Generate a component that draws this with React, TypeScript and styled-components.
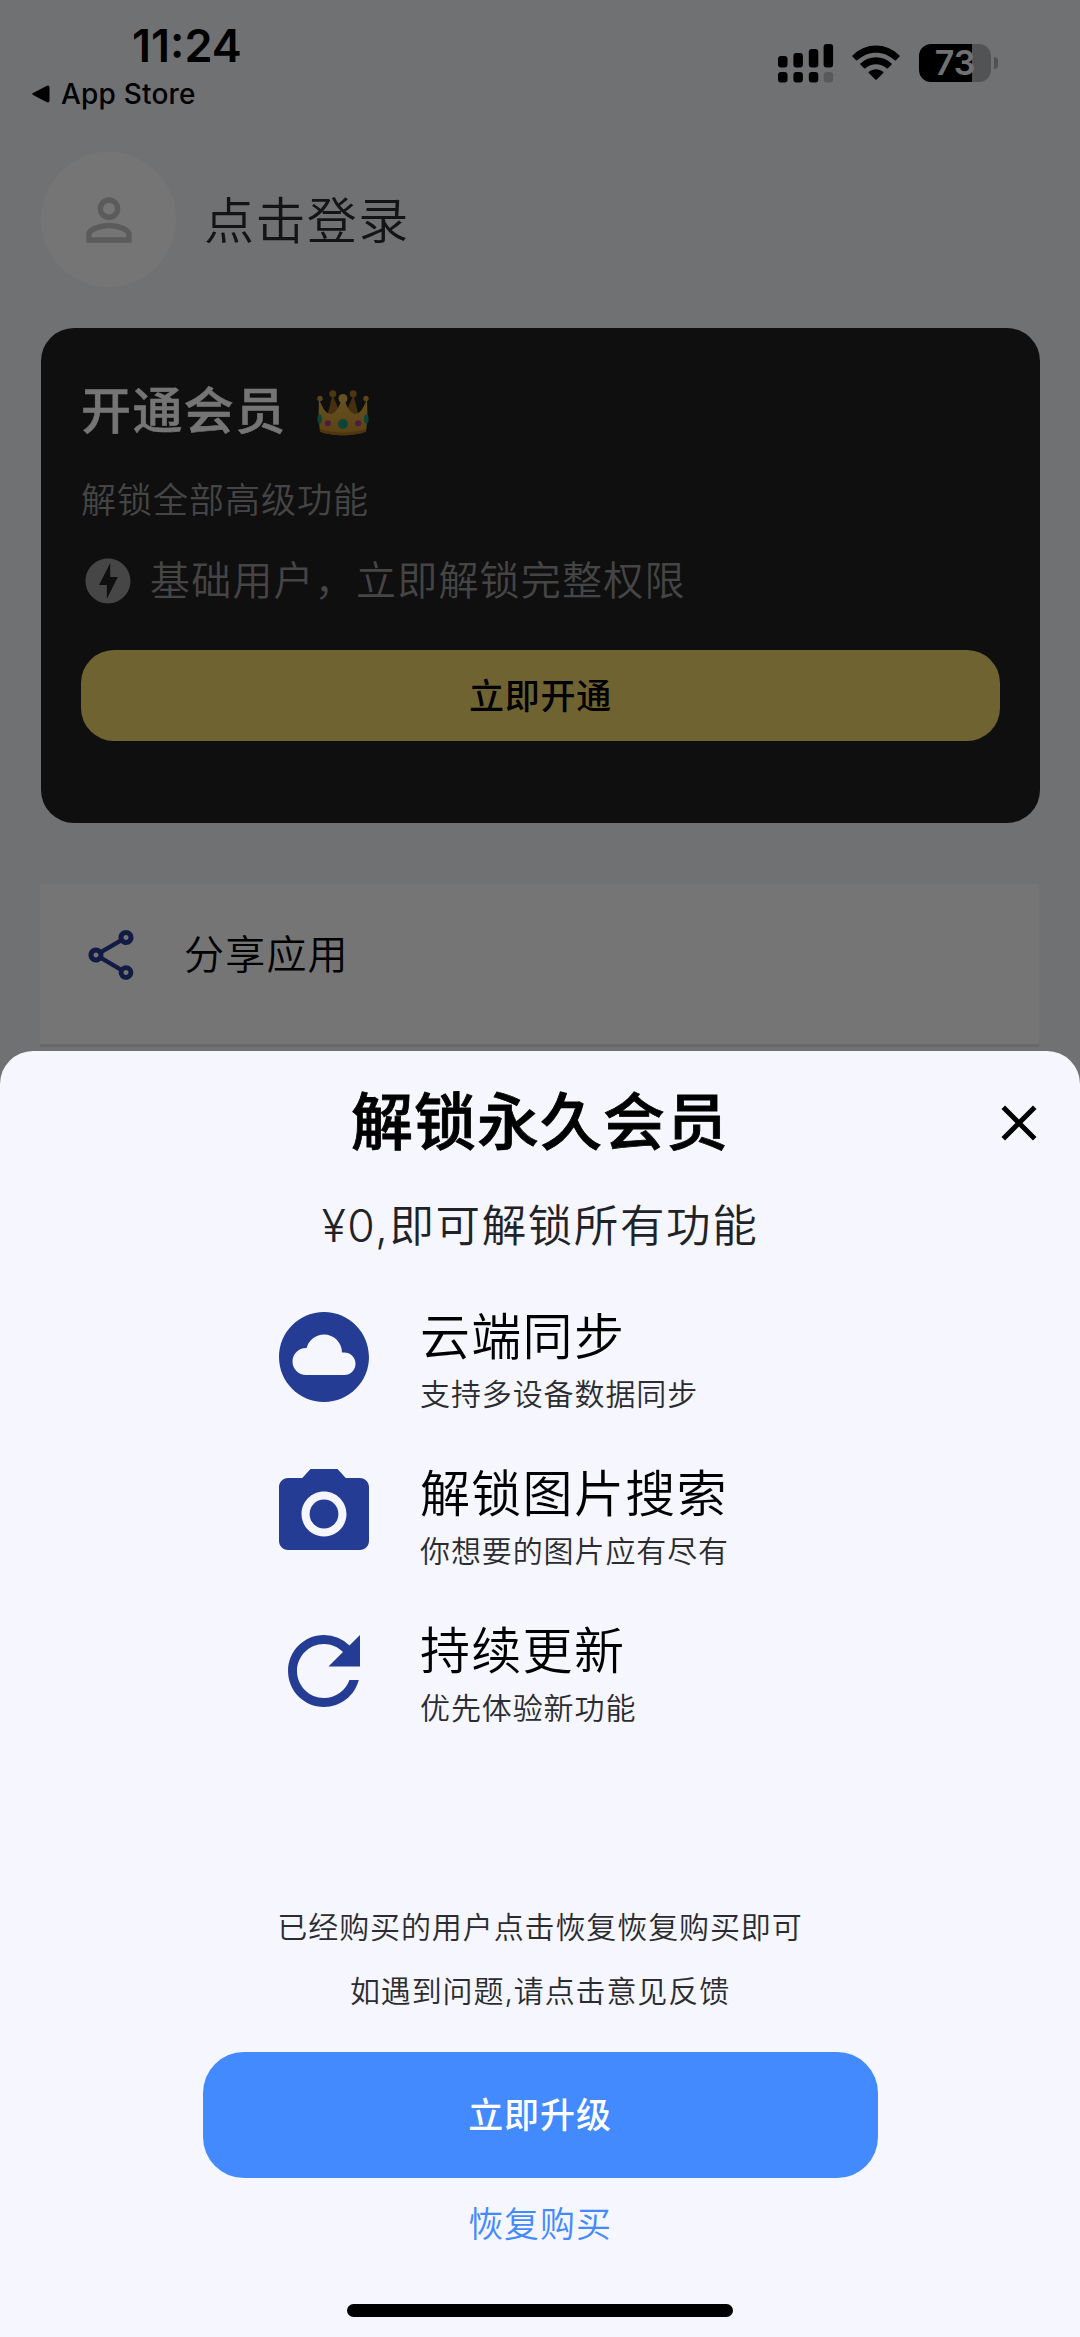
import React from "react";
import styled, { createGlobalStyle } from "styled-components";
import {
  MdPersonOutline,
  MdOfflineBolt,
  MdOutlineShare,
  MdClose,
  MdCloudCircle,
  MdCameraAlt,
  MdRefresh,
} from "react-icons/md";

const Global = createGlobalStyle`
  html, body { margin: 0; padding: 0; }
  * { box-sizing: border-box; }
  body {
    font-family: Inter, "Noto Sans CJK SC", sans-serif;
    -webkit-font-smoothing: antialiased;
  }
  button { font: inherit; border: 0; background: none; padding: 0; margin: 0; color: inherit; }
  svg { display: block; flex: none; }
`;

const Screen = styled.div`
  position: relative;
  width: 1080px;
  height: 2337px;
  overflow: hidden;
  background: #f5f7fa;
`;

const Text = styled.span<{
  $size: number;
  $line: number;
  $spacing?: number;
  $weight?: number;
  $color?: string;
  $stroke?: number;
}>`
  display: block;
  white-space: nowrap;
  font-size: ${(p) => p.$size}px;
  line-height: ${(p) => p.$line}px;
  letter-spacing: ${(p) => p.$spacing ?? 0}px;
  font-weight: ${(p) => p.$weight ?? 350};
  color: ${(p) => p.$color ?? "#000"};
  -webkit-text-stroke: ${(p) => p.$stroke ?? 0}px currentColor;
`;

const StatusBar = styled.header`
  display: flex;
  justify-content: space-between;
  height: 152px;
  padding: 17px 82px 0 32px;
`;

const Clock = styled.div`
  padding-left: 100px;
`;

const BackLink = styled.div`
  display: flex;
  align-items: center;
  gap: 11px;
  margin-top: 3px;
`;

const Indicators = styled.div`
  display: flex;
  align-items: flex-start;
  padding-top: 27px;
`;

const Profile = styled.section`
  display: flex;
  align-items: center;
  gap: 28px;
  height: 135px;
  padding-left: 41px;
`;

const Avatar = styled.div`
  display: flex;
  align-items: center;
  justify-content: center;
  width: 135px;
  height: 135px;
  border-radius: 50%;
  background: #fff;
  color: #c6c6c6;
`;

const ProfileName = styled.div`
  padding-top: 3px;
`;

const MemberCard = styled.section`
  display: flex;
  flex-direction: column;
  margin: 41px 40px 0 41px;
  height: 495px;
  padding: 47px 40px 0;
  border-radius: 33px;
  background: #212121;
`;

const CardTitle = styled.div`
  display: flex;
  align-items: center;
  gap: 30px;
  height: 72px;
  margin-bottom: 28px;
`;

const CrownSlot = styled.div`
  padding-top: 4px;
`;

const CardStatus = styled.div`
  display: flex;
  align-items: center;
  gap: 15px;
  height: 60px;
  margin: 26px 0 39px;
  color: #9a9a9a;
`;

const GoldButton = styled.button`
  display: flex;
  align-items: center;
  justify-content: center;
  height: 91px;
  border-radius: 33px;
  background: #f5d76e;
`;

const ShareRow = styled.div`
  display: flex;
  align-items: center;
  gap: 43px;
  height: 163px;
  margin: 61px 41px 0 40px;
  padding: 0 41px 18px;
  background: #fff;
  border-bottom: 3px solid #e2e2e2;
  color: #263c94;
`;

const Scrim = styled.div`
  position: absolute;
  inset: 0;
  background: rgba(0, 0, 0, 0.54);
`;

const Sheet = styled.section`
  position: absolute;
  left: 0;
  right: 0;
  bottom: 0;
  height: 1286px;
  display: flex;
  flex-direction: column;
  align-items: center;
  border-radius: 33px 33px 0 0;
  background: #f5f6fe;
`;

const SheetHeader = styled.div`
  display: grid;
  grid-template-columns: 1fr auto 1fr;
  align-items: center;
  width: 100%;
  height: 144px;
`;

const CloseButton = styled.button`
  grid-column: 3;
  justify-self: end;
  margin-right: 31px;
`;

const Features = styled.ul`
  list-style: none;
  margin: 44px 0 0;
  padding: 0;
  width: 540px;
`;

const Feature = styled.li`
  display: flex;
  align-items: flex-start;
  gap: 42px;
  height: 157px;
  color: #243c94;
`;

const FeatureIcon = styled.div`
  padding-top: 2px;
`;

const Notes = styled.div`
  display: flex;
  flex-direction: column;
  align-items: center;
  margin-top: 123px;
`;

const UpgradeButton = styled.button`
  display: flex;
  align-items: center;
  justify-content: center;
  width: 675px;
  height: 126px;
  margin-top: 29px;
  border-radius: 41px;
  background: #448aff;
`;

const RestoreButton = styled.button`
  margin-top: 21px;
`;

const HomeIndicator = styled.div`
  width: 386px;
  height: 13px;
  margin-top: 55px;
  border-radius: 7px;
  background: #000;
`;

function Signal() {
  return (
    <svg width="56" height="40" viewBox="0 0 56 40">
      <rect x="0" y="12" width="9.5" height="11.5" rx="3" />
      <rect x="15.4" y="9" width="9.5" height="14.5" rx="3" />
      <rect x="30.8" y="5" width="9.5" height="18.5" rx="3" />
      <rect x="45.6" y="0" width="9.5" height="23.5" rx="3" />
      <rect x="0" y="28" width="9.5" height="10.5" rx="3" />
      <rect x="15.4" y="28" width="9.5" height="10.5" rx="3" />
      <rect x="30.8" y="28" width="9.5" height="10.5" rx="3" />
      <rect x="45.6" y="28" width="9.5" height="10.5" rx="3" fill="#bfc3c6" />
    </svg>
  );
}

const WifiSlot = styled.div`
  margin: 1px 19px 0 18px;
`;

function Wifi() {
  return (
    <WifiSlot>
      <svg width="48" height="36" viewBox="0 0 48 36">
        <path d="M.6 10.500C13.500-2.800 34.500-2.800 47.400 10.500Q48 11.200 47.400 11.800L43.800 15.200Q43.200 15.700 42.500 15.100C32 5.200 16 5.200 5.500 15.100Q4.800 15.700 4.200 15.200L.6 11.800Q0 11.200 .6 10.500Z" />
        <path d="M8.500 18.500C17 10.200 31 10.200 39.500 18.500Q40.100 19.200 39.500 19.800L35.900 23.300Q35.300 23.800 34.600 23.200C28.500 17.800 19.500 17.800 13.400 23.200Q12.700 23.800 12.100 23.300L8.500 19.800Q7.900 19.200 8.500 18.500Z" />
        <path d="M16.800 26.700C21 23.300 27 23.300 31.200 26.700Q31.900 27.300 31.200 28L24.700 34.500Q24 35.200 23.300 34.500L16.800 28Q16.100 27.300 16.800 26.700Z" />
      </svg>
    </WifiSlot>
  );
}

const Battery = styled.div`
  display: flex;
  align-items: center;
  justify-content: center;
  width: 72px;
  height: 38px;
  border-radius: 12px;
  background: linear-gradient(90deg, #000 73%, #b4b5b7 73%);
`;

const BatteryCap = styled.div`
  align-self: flex-start;
  width: 4px;
  height: 12px;
  margin: 13px 0 0 3px;
  border-radius: 0 6px 6px 0;
  background: #b0b1b3;
`;

function Crown() {
  return (
    <svg width="52" height="46" viewBox="0 0 52 46">
      <defs>
        <linearGradient id="gold" x1="0" x2="0" y1="0" y2="1">
          <stop offset="0" stopColor="#dcb04a" />
          <stop offset="1" stopColor="#c98f2a" />
        </linearGradient>
      </defs>
      <path d="M10 27L15.500 5L22 20H30L36.500 5L42 27Z" fill="#9c6a1e" />
      <circle cx="15.800" cy="3.800" r="3.500" fill="#a87826" />
      <circle cx="36.200" cy="3.800" r="3.500" fill="#a87826" />
      <path d="M2 9C6 19 9 24 14.500 24C20 22 23 15 25 8H27C29 15 32 22 37.500 24C43 24 46 19 50 9L50.500 28L49 41.500C37 46.500 15 46.500 3 41.500L1.500 28Z" fill="url(#gold)" />
      <circle cx="3" cy="8.500" r="2.700" fill="#c8963a" />
      <circle cx="49" cy="8.500" r="2.700" fill="#c8963a" />
      <circle cx="26" cy="8.500" r="4.500" fill="#dcb04a" />
      <path d="M2.700 39C15 43.500 37 43.500 49.300 39L49 41.500C37 46.500 15 46.500 3 41.500Z" fill="#a87322" />
      <circle cx="26" cy="34" r="5" fill="#16967a" />
      <circle cx="10.800" cy="33.300" r="3" fill="#a8389c" />
      <circle cx="41.200" cy="33.300" r="3" fill="#a8389c" />
      <ellipse cx="2.700" cy="29" rx="2.300" ry="4.500" fill="#16967a" />
      <ellipse cx="49.300" cy="29" rx="2.300" ry="4.500" fill="#16967a" />
    </svg>
  );
}

const features = [
  { Icon: MdCloudCircle, title: "云端同步", detail: "支持多设备数据同步" },
  { Icon: MdCameraAlt, title: "解锁图片搜索", detail: "你想要的图片应有尽有" },
  { Icon: MdRefresh, title: "持续更新", detail: "优先体验新功能" },
];

export default function App() {
  return (
    <Screen>
      <Global />
      <StatusBar>
        <div>
          <Clock>
            <Text $size={45} $line={58} $weight={600}>11:24</Text>
          </Clock>
          <BackLink>
            <svg width="18" height="18" viewBox="0 0 18 18">
              <path d="M1 8L15 .8Q17.500 0 17.500 2.500V15.500Q17.500 18 15 17.200L1 10Q-.5 9 1 8Z" />
            </svg>
            <Text $size={28} $line={32} $weight={500} $spacing={0.2}>App Store</Text>
          </BackLink>
        </div>
        <Indicators>
          <Signal />
          <Wifi />
          <Battery>
            <Text $size={34} $line={38} $weight={600} $color="#f5f7fa">73</Text>
          </Battery>
          <BatteryCap />
        </Indicators>
      </StatusBar>

      <Profile>
        <Avatar>
          <MdPersonOutline size={68} />
        </Avatar>
        <ProfileName>
          <Text $size={50} $line={70} $spacing={1.4} $color="#2b2c2e">点击登录</Text>
        </ProfileName>
      </Profile>

      <MemberCard>
        <CardTitle>
          <Text $size={50} $line={72} $spacing={1.4} $weight={500} $stroke={0.5} $color="#fff">开通会员</Text>
          <CrownSlot>
            <Crown />
          </CrownSlot>
        </CardTitle>
        <Text $size={35} $line={50} $spacing={1} $color="#979797">解锁全部高级功能</Text>
        <CardStatus>
          <MdOfflineBolt size={54} />
          <Text $size={40} $line={60} $spacing={1.2} $color="#979797">基础用户，立即解锁完整权限</Text>
        </CardStatus>
        <GoldButton>
          <Text $size={35} $line={50} $spacing={0.8} $weight={500}>立即开通</Text>
        </GoldButton>
      </MemberCard>

      <ShareRow>
        <MdOutlineShare size={60} />
        <Text $size={40} $line={60} $spacing={1.2}>分享应用</Text>
      </ShareRow>

      <Scrim />

      <Sheet>
        <SheetHeader>
          <span />
          <Text $size={62} $line={90} $spacing={1} $weight={500} $stroke={0.8}>解锁永久会员</Text>
          <CloseButton aria-label="关闭">
            <MdClose size={60} />
          </CloseButton>
        </SheetHeader>
        <Text $size={44.5} $line={62} $spacing={1.6} $color="#212226">¥0,即可解锁所有功能</Text>
        <Features>
          {features.map(({ Icon, title, detail }) => (
            <Feature key={title}>
              <FeatureIcon>
                <Icon size={108} />
              </FeatureIcon>
              <div>
                <Text $size={50} $line={72} $spacing={1.3}>{title}</Text>
                <Text $size={30} $line={43} $spacing={0.9} $color="#2b2c30">{detail}</Text>
              </div>
            </Feature>
          ))}
        </Features>
        <Notes>
          <Text $size={30} $line={64} $spacing={0.9} $color="#2b2c30">已经购买的用户点击恢复恢复购买即可</Text>
          <Text $size={30} $line={64} $spacing={0.9} $color="#2b2c30">如遇到问题,请点击意见反馈</Text>
        </Notes>
        <UpgradeButton>
          <Text $size={35} $line={50} $spacing={0.9} $weight={500} $color="#fff">立即升级</Text>
        </UpgradeButton>
        <RestoreButton>
          <Text $size={35} $line={50} $spacing={0.9} $color="#448aff">恢复购买</Text>
        </RestoreButton>
        <HomeIndicator />
      </Sheet>
    </Screen>
  );
}
